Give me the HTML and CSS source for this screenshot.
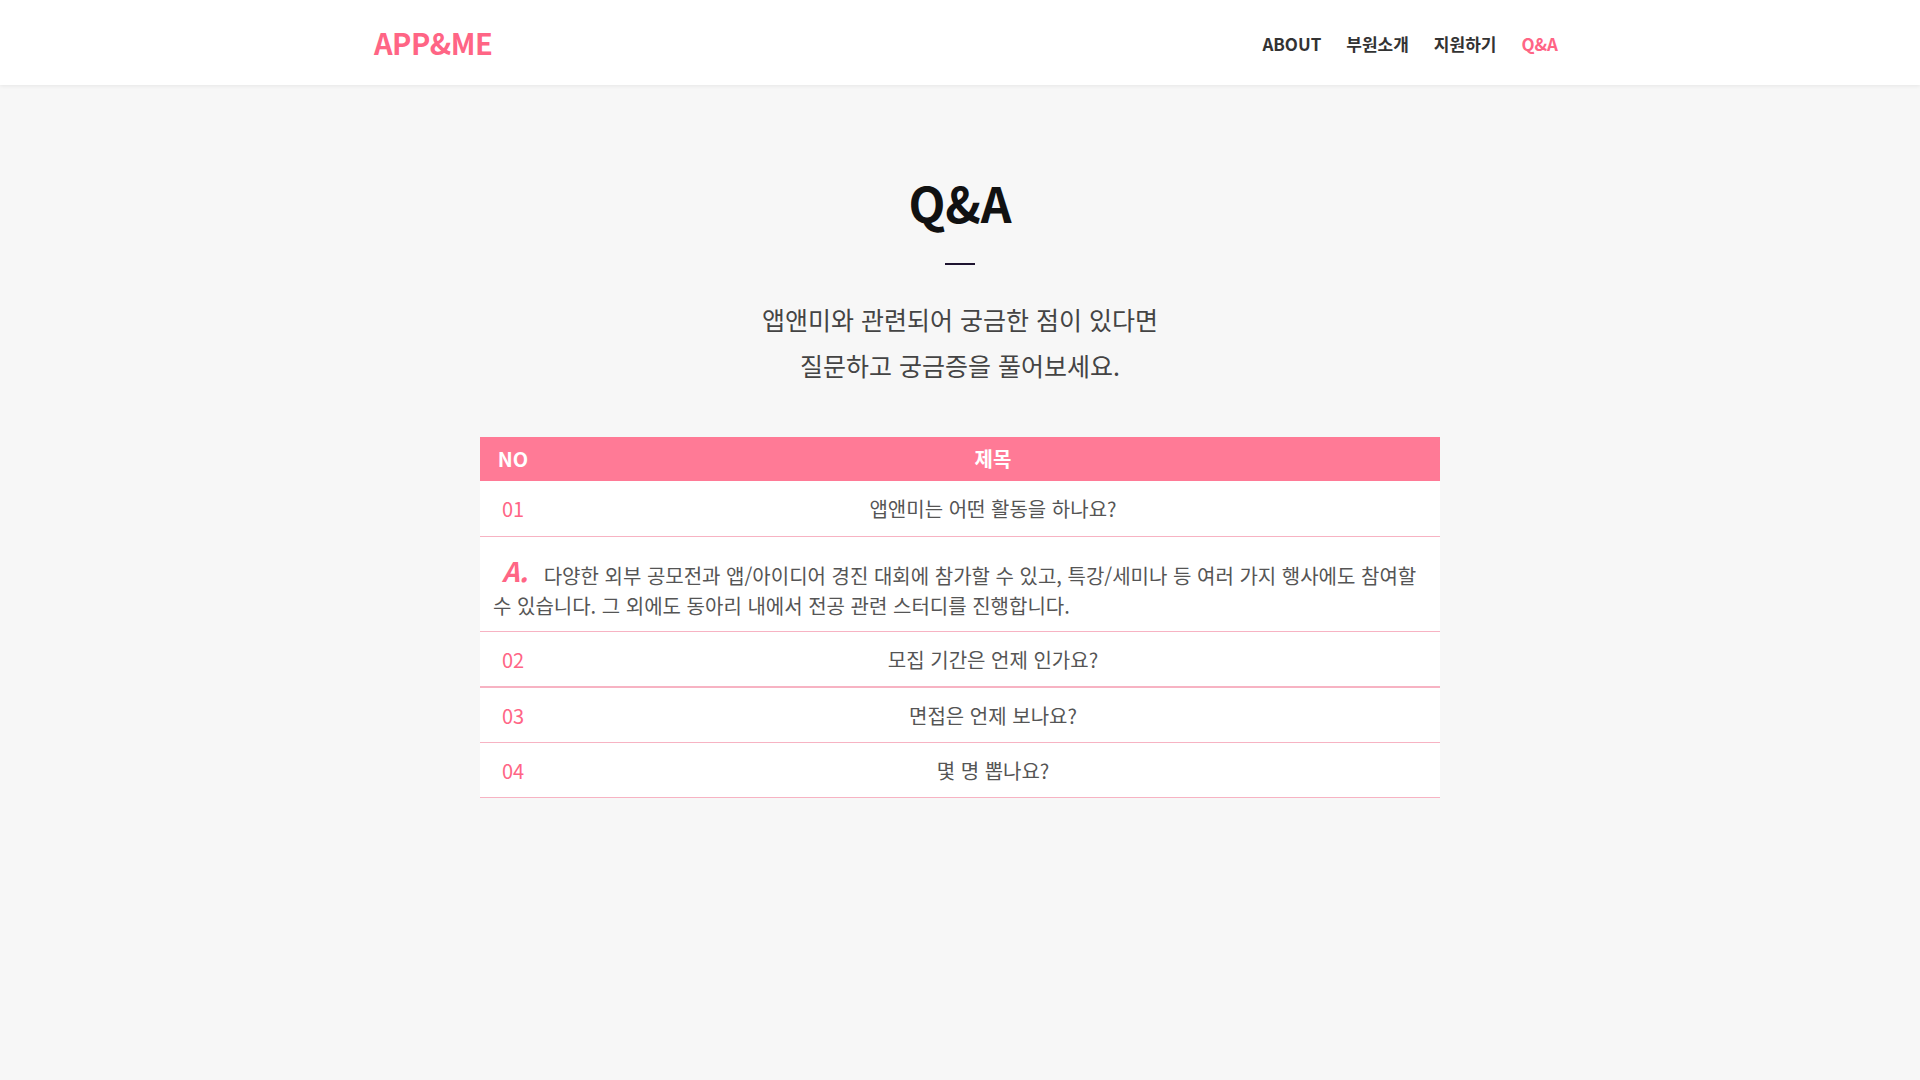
FILE: index.html
```html
<!DOCTYPE html>
<html lang="ko">
<head>
<meta charset="utf-8">
<title>APP&amp;ME Q&amp;A</title>
<link rel="stylesheet" href="styles.css">
</head>
<body>
<header class="site-header">
  <div class="header-inner">
    <a class="logo" href="#">APP&amp;ME</a>
    <nav class="nav">
      <a class="nav-link" href="#">ABOUT</a>
      <a class="nav-link" href="#">부원소개</a>
      <a class="nav-link" href="#">지원하기</a>
      <a class="nav-link active" href="#">Q&amp;A</a>
    </nav>
  </div>
</header>
<main class="content">
  <h1 class="page-title">Q&amp;A</h1>
  <div class="title-bar"></div>
  <p class="intro">앱앤미와 관련되어 궁금한 점이 있다면<br>질문하고 궁금증을 풀어보세요.</p>
  <div class="qa-table">
    <div class="qa-head">
      <div class="col-no">NO</div>
      <div class="col-title">제목</div>
    </div>
    <div class="qa-row first">
      <div class="col-no num">01</div>
      <div class="col-title">앱앤미는 어떤 활동을 하나요?</div>
    </div>
    <div class="qa-answer"><span class="answer-mark">A.</span> 다양한 외부 공모전과 앱/아이디어 경진 대회에 참가할 수 있고, 특강/세미나 등 여러 가지 행사에도 참여할 수 있습니다. 그 외에도 동아리 내에서 전공 관련 스터디를 진행합니다.</div>
    <div class="qa-row thick">
      <div class="col-no num">02</div>
      <div class="col-title">모집 기간은 언제 인가요?</div>
    </div>
    <div class="qa-row">
      <div class="col-no num">03</div>
      <div class="col-title">면접은 언제 보나요?</div>
    </div>
    <div class="qa-row">
      <div class="col-no num">04</div>
      <div class="col-title">몇 명 뽑나요?</div>
    </div>
  </div>
</main>
</body>
</html>
```

FILE: styles.css
```css
* { box-sizing: border-box; }
html, body { margin: 0; padding: 0; }
body {
  background: #f7f7f7;
  font-family: "Noto Sans CJK KR", "Noto Sans", sans-serif;
  color: #444;
  min-height: 1080px;
}
a { text-decoration: none; }

.site-header {
  background: #fff;
  height: 85px;
  box-shadow: 0 1px 4px rgba(0,0,0,0.07);
}
.header-inner {
  width: 1200px;
  margin: 0 auto;
  height: 100%;
  display: flex;
  align-items: center;
  justify-content: space-between;
  padding-left: 14px;
  padding-right: 2px;
}
.logo {
  color: #ff6585;
  font-size: 29px;
  font-weight: 700;
  letter-spacing: -0.5px;
  margin-top: -2px;
}
.nav { display: flex; gap: 25px; margin-top: 2px; }
.nav-link {
  color: #333;
  font-size: 17px;
  font-weight: 700;
}
.nav-link.active { color: #ff6585; }

.content {
  display: flex;
  flex-direction: column;
  align-items: center;
  padding-top: 93px;
}
.page-title {
  margin: 0;
  font-size: 48px;
  line-height: 48px;
  font-weight: 700;
  color: #111;
}
.title-bar {
  width: 30px;
  height: 2px;
  background: #1e1430;
  margin-top: 37px;
}
.intro {
  margin: 31px 0 0;
  font-size: 25px;
  line-height: 46px;
  text-align: center;
  color: #444;
}

.qa-table {
  width: 960px;
  margin-top: 49px;
  background: #fff;
}
.qa-head {
  display: flex;
  height: 44px;
  align-items: center;
  background: #ff7a96;
  color: #fff;
  font-weight: 700;
  font-size: 20px;
  padding-bottom: 1px;
}
.col-no { width: 66px; text-align: center; }
.col-title { flex: 1; text-align: center; }
.qa-row {
  display: flex;
  align-items: center;
  height: 55px;
  border-bottom: 1px solid #f7b3c3;
  font-size: 20px;
  color: #555;
}
.qa-row.first { height: 56px; }
.qa-row.thick { border-bottom-width: 2px; height: 56px; }
.num { color: #ff6585; }
.qa-answer {
  padding: 24px 13px 10px;
  font-size: 20px;
  line-height: 30px;
  color: #555;
  border-bottom: 1px solid #f7b3c3;
}
.answer-mark {
  color: #ff6585;
  font-style: italic;
  font-weight: 700;
  font-size: 27px;
  line-height: 20px;
  vertical-align: 2px;
  margin-left: 9px;
  margin-right: 10px;
}
```
